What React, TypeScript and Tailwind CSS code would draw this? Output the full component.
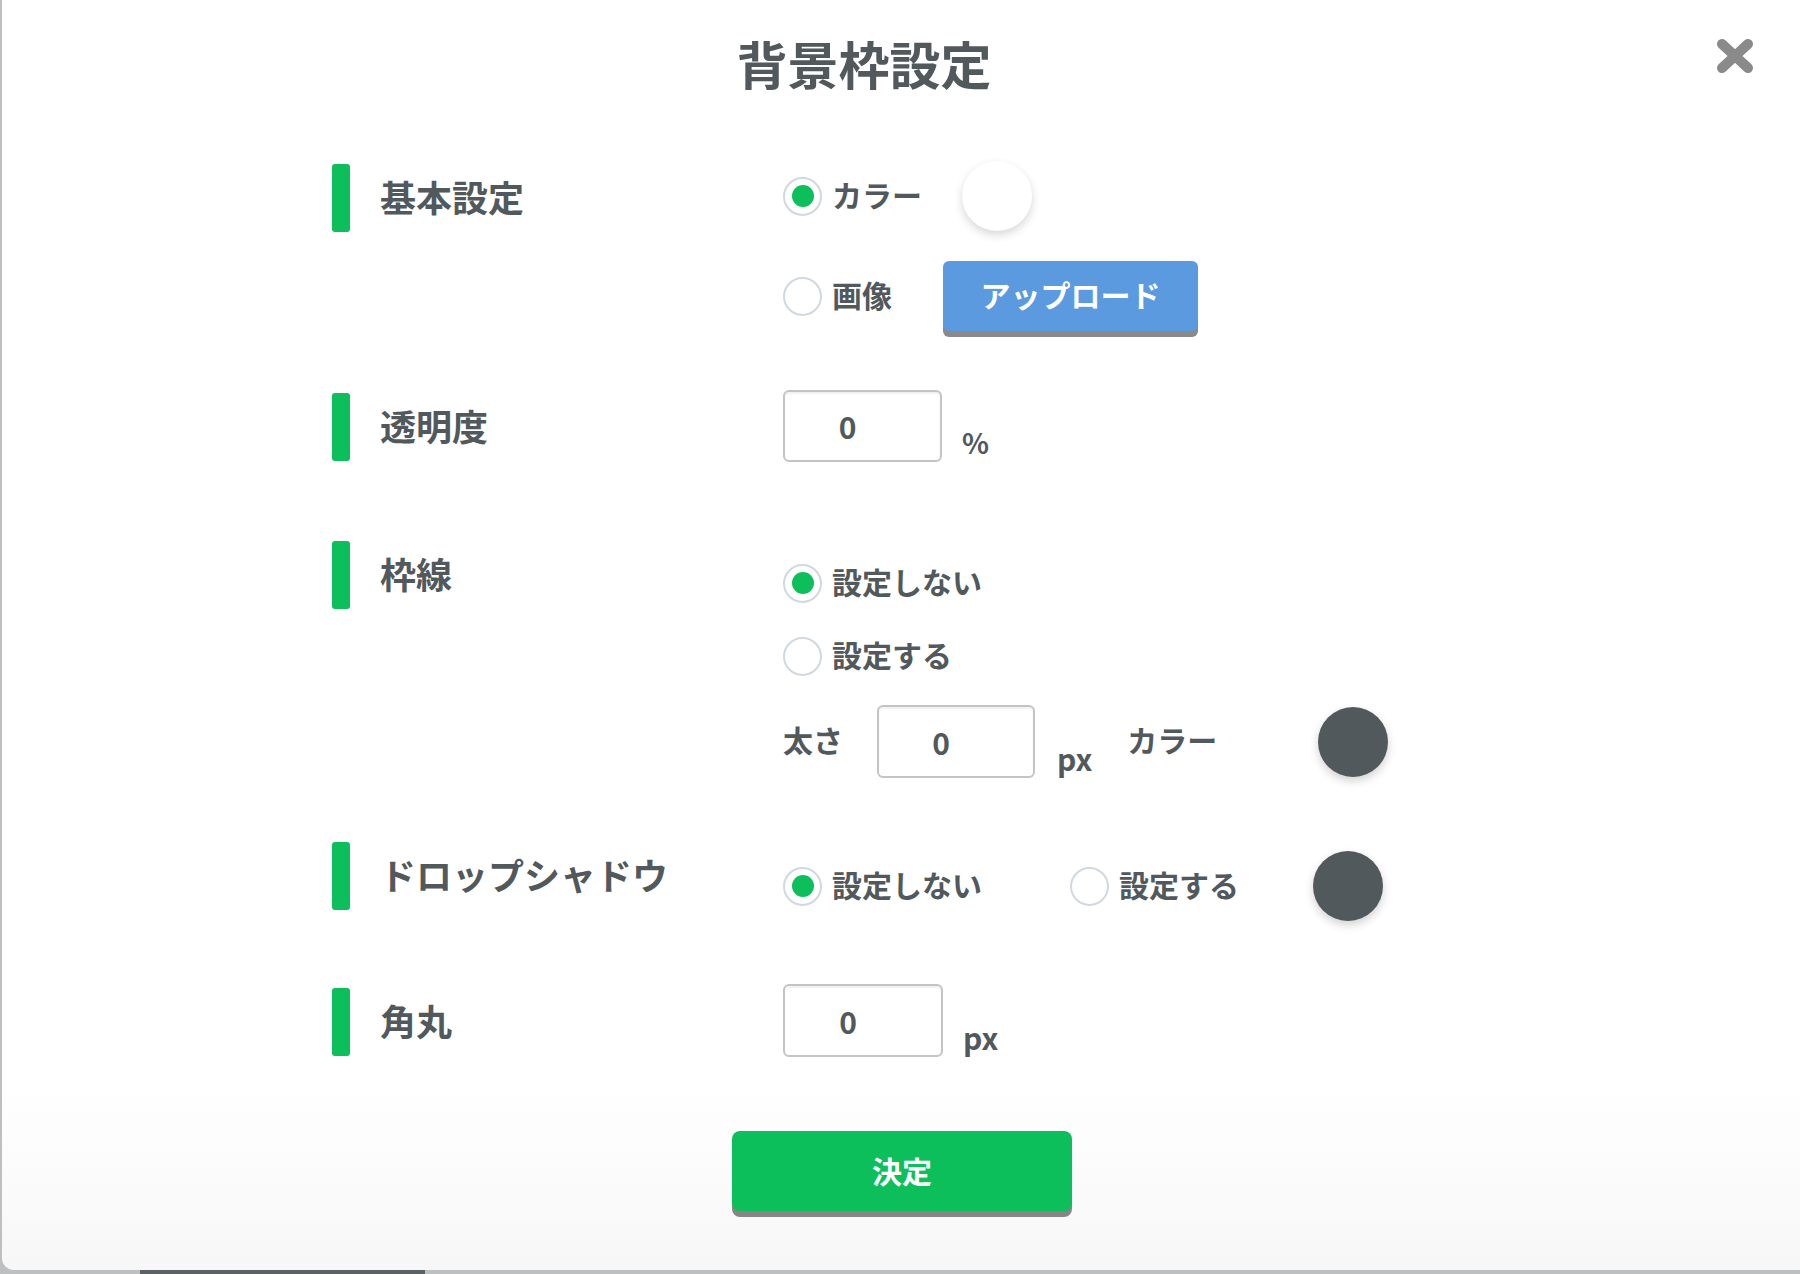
import React from "react";

const GREEN = "bg-[#0dbf5a]";

function Radio({ checked }: { checked?: boolean }) {
  return (
    <span className="w-[39px] h-[39px] rounded-full border-2 border-[#d0d8e0] bg-white flex items-center justify-center shrink-0">
      {checked && <span className={`w-[22px] h-[22px] rounded-full ${GREEN}`} />}
    </span>
  );
}

function Label({ text }: { text: string }) {
  return (
    <div className="flex items-center">
      <span className={`w-[18px] h-[68px] rounded-[3px] ${GREEN} shrink-0`} />
      <span className="ml-[30px] pb-[4px] text-[36px] font-bold leading-none text-[#51595d] whitespace-nowrap">{text}</span>
    </div>
  );
}

function NumInput({ w, h }: { w: string; h: string }) {
  return (
    <input
      readOnly
      value="0"
      className={`${w} ${h} shrink-0 rounded-[6px] border-2 border-[#c4c4c4] bg-white text-center pr-[30px] text-[30px] font-bold text-[#51595d] outline-none shadow-[inset_0_2px_2px_rgba(0,0,0,0.06)]`}
    />
  );
}

function Opt({ text }: { text: string }) {
  return <span className="ml-[10px] pb-[5px] text-[30px] font-bold leading-none text-[#51595d] whitespace-nowrap">{text}</span>;
}

export default function App() {
  return (
    <div className="w-[1800px] h-[1274px] bg-[#bcc0c0] overflow-hidden font-['Noto_Sans_CJK_JP','Noto_Sans',sans-serif]">
      <div className="relative ml-[2px] w-[1810px] h-[1270px] bg-gradient-to-b from-white via-white via-85% to-[#f7f7f7] rounded-bl-[12px]">
        {/* header */}
        <div className="pt-[38px] w-[1724px] flex justify-center">
          <h1 className="text-[51px] leading-[50px] h-[50px] font-bold text-[#52595d] whitespace-nowrap">背景枠設定</h1>
        </div>
        <button className="absolute left-[1714px] top-[38px] w-[38px] h-[36px]" aria-label="close">
          <svg width="38" height="36" viewBox="0 0 38 36">
            <path d="M6 6 L32 30 M32 6 L6 30" stroke="#8a8a8a" strokeWidth="10" strokeLinecap="round" />
          </svg>
        </button>

        <div className="pl-[330px]">
          {/* section 1 */}
          <div className="mt-[73px] flex">
            <div className="w-[451px] mt-[3px]">
              <Label text="基本設定" />
            </div>
            <div className="flex flex-col">
              <div className="h-[70px] flex items-center">
                <Radio checked />
                <Opt text="カラー" />
                <span className="ml-[40px] w-[70px] h-[70px] rounded-full bg-white shadow-[0_4px_10px_rgba(0,0,0,0.16)]" />
              </div>
              <div className="mt-[30px] h-[70px] flex items-center">
                <Radio />
                <Opt text="画像" />
                <button className="ml-[51px] w-[255px] h-[70px] pb-[5px] rounded-[6px] bg-[#5b9ade] shadow-[0_6px_0_#8a8a8a] text-white text-[30px] font-bold leading-none">
                  アップロード
                </button>
              </div>
            </div>
          </div>

          {/* section 2 */}
          <div className="mt-[59px] flex">
            <div className="w-[451px] mt-[3px]">
              <Label text="透明度" />
            </div>
            <div className="flex items-end">
              <NumInput w="w-[159px]" h="h-[72px]" />
              <span className="ml-[20px] h-[40px] flex items-center text-[28px] font-bold leading-none text-[#51595d]">%</span>
            </div>
          </div>

          {/* section 3 */}
          <div className="mt-[79px] flex">
            <div className="w-[451px]">
              <Label text="枠線" />
            </div>
            <div className="flex flex-col pt-[22px]">
              <div className="h-[40px] flex items-center">
                <Radio checked />
                <Opt text="設定しない" />
              </div>
              <div className="mt-[33px] h-[40px] flex items-center">
                <Radio />
                <Opt text="設定する" />
              </div>
              <div className="mt-[29px] h-[73px] flex items-center">
                <span className="pb-[5px] text-[30px] font-bold leading-none text-[#51595d] whitespace-nowrap">太さ</span>
                <div className="ml-[34px] flex items-end h-[73px]">
                  <NumInput w="w-[158px]" h="h-[73px]" />
                  <span className="ml-[22px] h-[40px] flex items-center text-[30px] font-bold leading-none text-[#51595d]">px</span>
                </div>
                <span className="ml-[35px] pb-[6px] text-[30px] font-bold leading-none text-[#51595d] whitespace-nowrap">カラー</span>
                <span className="ml-[101px] w-[70px] h-[70px] rounded-full bg-[#51595c] shadow-[0_4px_10px_rgba(0,0,0,0.18)]" />
              </div>
            </div>
          </div>

          {/* section 4 */}
          <div className="mt-[64px] flex">
            <div className="w-[451px]">
              <Label text="ドロップシャドウ" />
            </div>
            <div className="mt-[9px] h-[70px] flex items-center">
              <Radio checked />
              <Opt text="設定しない" />
              <span className="ml-[88px]">
                <Radio />
              </span>
              <Opt text="設定する" />
              <span className="ml-[74px] w-[70px] h-[70px] rounded-full bg-[#51595c] shadow-[0_4px_10px_rgba(0,0,0,0.18)]" />
            </div>
          </div>

          {/* section 5 */}
          <div className="mt-[63px] flex">
            <div className="w-[451px] mt-[4px]">
              <Label text="角丸" />
            </div>
            <div className="flex items-end">
              <NumInput w="w-[160px]" h="h-[73px]" />
              <span className="ml-[20px] h-[40px] flex items-center text-[30px] font-bold leading-none text-[#51595d]">px</span>
            </div>
          </div>
        </div>

        {/* submit */}
        <button className={`mt-[74px] ml-[730px] w-[340px] h-[80px] pb-[2px] rounded-[8px] ${GREEN} shadow-[0_6px_0_#868686] text-white text-[30px] font-bold leading-none`}>
          決定
        </button>
      </div>
      <div className="ml-[140px] w-[285px] h-[4px] bg-[#5a6266]" />
    </div>
  );
}
